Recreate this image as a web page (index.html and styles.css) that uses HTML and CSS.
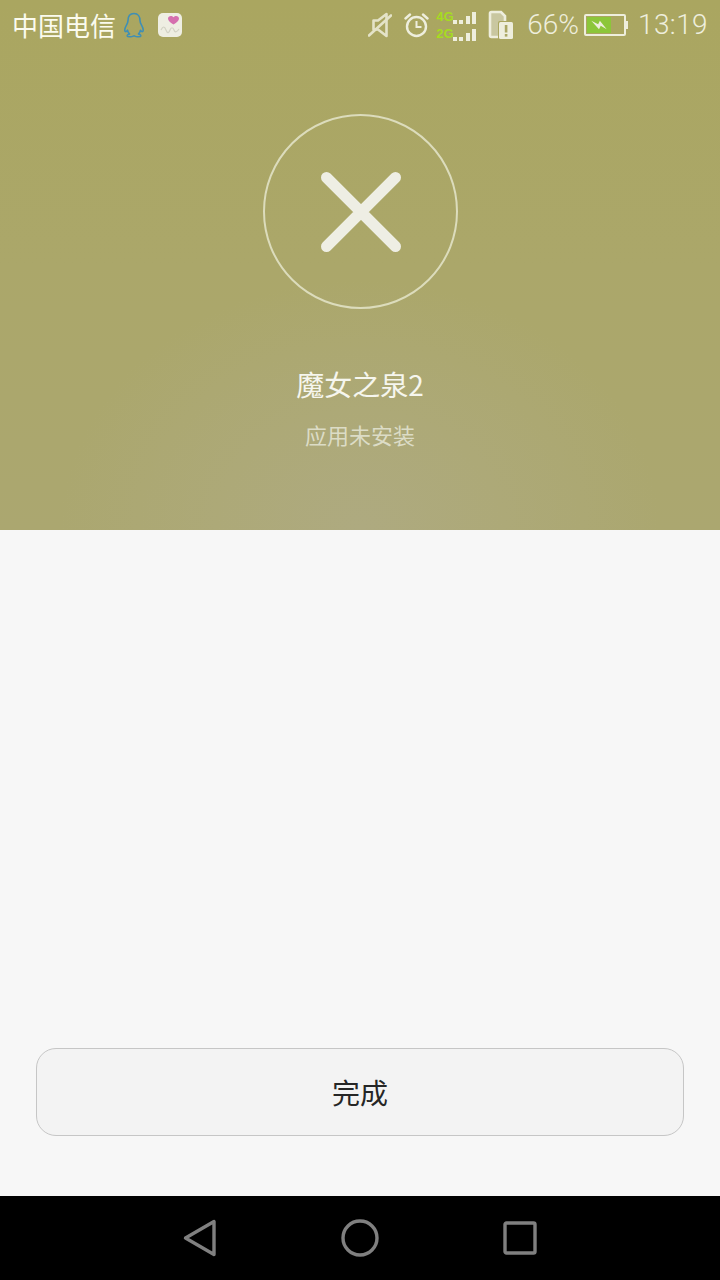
FILE: index.html
```html
<!DOCTYPE html>
<html lang="zh-CN">
<head>
    <meta charset="UTF-8">
    <meta name="viewport" content="width=device-width, initial-scale=1.0">
    <title>应用未安装</title>
    <link rel="stylesheet" href="styles.css">
</head>
<body>
    <div class="cabecera">
        <div class="estado">
            <div class="estado-izq">
                <span class="operador">中国电信</span>
                <svg class="qq" width="22" height="26" viewBox="0 0 22 26" fill="none" stroke="#3f8fb5" stroke-width="1.6" stroke-linejoin="round">
                    <path d="M11 1.500C6.800 1.500 5 4.800 5 8.500c0 2-.6 3-1.800 5.200C2 16 1.400 18.600 2.300 19.500c.7.600 1.500-.3 2.200-1.300.4 1.600 1 2.800 2 3.700-1.500.5-2.500 1.200-2.300 2 .3 1 3 .9 4.800.6 1-.2 1.500-.6 2-.6s1 .4 2 .6c1.800.3 4.500.4 4.800-.6.2-.8-.8-1.500-2.300-2 1-.9 1.600-2.100 2-3.700.7 1 1.500 1.900 2.200 1.300.9-.9.300-3.500-.9-5.800C17.600 11.500 17 10.500 17 8.500 17 4.800 15.200 1.500 11 1.500Z"/>
                </svg>
                <svg class="salud" width="24" height="24" viewBox="0 0 24 24">
                    <rect width="24" height="24" rx="5" fill="#eeeee2"/>
                    <path d="M15.500 11.500c-3.500-2.300-5.500-3.800-5.500-6 0-2.700 3.800-3.500 5.500-1.200C17.200 2 21 2.800 21 5.500c0 2.200-2 3.700-5.500 6Z" fill="#d56fae"/>
                    <path d="M3 17c2-4 3.500-4 5 0s3 3 4 0 3-3 4 0 3 2 5-1" fill="none" stroke="#d2d2c4" stroke-width="1.200"/>
                </svg>
            </div>
            <div class="estado-der">
                <svg class="mudo" width="24" height="26" viewBox="0 0 24 26" fill="none" stroke="#e4e3c8" stroke-width="2.600">
                    <path d="M5.500 8.500h4.500l8.500-6.500v22l-8.500-6.500H5.500Z" stroke-linejoin="round"/>
                    <path d="M1 23.500 23 3.500" stroke-linecap="round"/>
                </svg>
                <svg class="alarma" width="26" height="26" viewBox="0 0 26 26" fill="none" stroke="#eeeedd" stroke-width="2.400">
                    <circle cx="12.500" cy="14.500" r="9.500"/>
                    <path d="M12.500 9v6h5" stroke-width="2"/>
                    <path d="M1.500 6.500 6 2.500M23.500 6.500 19 2.500" stroke-linecap="round"/>
                </svg>
                <div class="senal">
                    <div class="senal-fila">
                        <span class="red">4G</span>
                        <div class="barras"><i class="b1"></i><i class="b2"></i><i class="b3"></i><i class="b4"></i></div>
                    </div>
                    <div class="senal-fila">
                        <span class="red">2G</span>
                        <div class="barras"><i class="b1"></i><i class="b2"></i><i class="b3"></i><i class="b4"></i></div>
                    </div>
                </div>
                <svg class="sim" width="26" height="30" viewBox="0 0 26 30">
                    <path d="M2 3.500A1.500 1.500 0 0 1 3.500 2H13l4 4v19.500a1.500 1.500 0 0 1-1.500 1.500h-12A1.500 1.500 0 0 1 2 25.500Z" fill="#c9c7a0" stroke="#eeeedd" stroke-width="2.600"/>
                    <rect x="10" y="11" width="16" height="19" rx="2" fill="#aaa660"/>
                    <rect x="11" y="12" width="14" height="17" rx="1.500" fill="#eeeedd"/>
                    <rect x="16.800" y="15" width="2.600" height="7.500" fill="#aba764"/>
                    <rect x="16.800" y="24" width="2.600" height="2.600" fill="#aba764"/>
                </svg>
                <span class="porcentaje">66%</span>
                <div class="bateria">
                    <div class="bateria-cuerpo">
                        <div class="bateria-carga" style="width: 68%">
                            <svg width="18" height="12" viewBox="0 0 20 14"><path d="M1 2 9 6l2-4 8 10-7-4-2 4Z" fill="#eeeedd"/></svg>
                        </div>
                    </div>
                    <div class="bateria-punta"></div>
                </div>
                <span class="hora">13:19</span>
            </div>
        </div>

        <div class="circulo">
            <svg width="80" height="80" viewBox="0 0 80 80" fill="none" stroke="#eeeee4" stroke-width="11" stroke-linecap="round">
                <path d="M5.500 5.500 74.500 74.500M74.500 5.500 5.500 74.500"/>
            </svg>
        </div>
        <h1 class="titulo">魔女之泉2</h1>
        <p class="subtitulo">应用未安装</p>
    </div>

    <div class="contenido">
        <button class="boton">完成</button>
    </div>

    <div class="navegacion">
        <svg width="34" height="38" viewBox="0 0 34 38" fill="none" stroke="#808080" stroke-width="3.400" stroke-linejoin="round">
            <path d="M2.500 19 31 2.500v33Z"/>
        </svg>
        <svg width="38" height="38" viewBox="0 0 38 38" fill="none" stroke="#808080" stroke-width="3.400">
            <circle cx="19" cy="19" r="17"/>
        </svg>
        <svg width="34" height="34" viewBox="0 0 34 34" fill="none" stroke="#808080" stroke-width="3.400" stroke-linejoin="round">
            <rect x="2" y="2" width="30" height="30" rx="1.500"/>
        </svg>
    </div>
</body>
</html>
```

FILE: styles.css
```css
*{
    box-sizing: border-box;
}
html, body{
    height: 100%;
}
body{
    margin: 0;
    display: flex;
    flex-direction: column;
    height: 1280px;
    overflow: hidden;
    font-family: "Noto Sans CJK SC", "Noto Sans", sans-serif;
    background: #f7f7f7;
}
.cabecera{
    height: 530px;
    display: flex;
    flex-direction: column;
    align-items: center;
    background:
        radial-gradient(ellipse 300px 250px at 50% 100%, #aeaa80 0%, rgba(174, 170, 124, .7) 45%, rgba(174, 170, 124, 0) 100%),
        linear-gradient(180deg, #aaa660 0%, #aba76a 50%, #aba770 100%);
}
.estado{
    width: 100%;
    height: 50px;
    padding: 0 12px 0 12px;
    display: flex;
    justify-content: space-between;
    align-items: center;
    color: #f4f4e6;
}
.estado-izq, .estado-der{
    display: flex;
    align-items: center;
}
.operador{
    font-size: 26px;
    line-height: 50px;
    color: #fbfbee;
}
.qq{
    margin-left: 7px;
}
.salud{
    margin-left: 13px;
}
.mudo{
    margin-right: 12px;
}
.alarma{
    margin-right: 6px;
}
.senal{
    display: flex;
    flex-direction: column;
    gap: 2px;
    width: 40px;
    margin-right: 12px;
}
.senal-fila{
    display: flex;
    justify-content: space-between;
    align-items: flex-end;
    height: 15px;
}
.red{
    font-family: "Liberation Sans", sans-serif;
    font-size: 13px;
    font-weight: bold;
    line-height: 15px;
    color: #a6dc20;
}
.barras{
    display: flex;
    align-items: flex-end;
    gap: 2.500px;
    margin-left: -4px;
}
.barras i{
    display: block;
    width: 4px;
    background: #eeeedd;
}
.b1{ height: 4px; }
.b2{ height: 4px; }
.b3{ height: 8px; }
.b4{ height: 12px; }
.porcentaje, .hora{
    font-family: Roboto, sans-serif;
    font-weight: 300;
    font-size: 28px;
    line-height: 50px;
    color: #eeeedd;
}
.porcentaje{
    margin-left: 13px;
}
.bateria{
    display: flex;
    align-items: center;
    margin-left: 5px;
}
.bateria-cuerpo{
    width: 42px;
    height: 22px;
    padding: 1px;
    border: 2px solid #eeeedd;
    border-radius: 2px;
}
.bateria-carga{
    height: 100%;
    display: flex;
    align-items: center;
    justify-content: center;
    background: #8cc63a;
}
.bateria-punta{
    width: 2px;
    height: 8px;
    background: #eeeedd;
}
.hora{
    margin-left: 10px;
    letter-spacing: .4px;
}
.circulo{
    width: 195px;
    height: 195px;
    margin-top: 64px;
    display: flex;
    align-items: center;
    justify-content: center;
    border: 2px solid #dcdcbc;
    border-radius: 50%;
}
.circulo svg{
    margin-left: 1px;
}
.titulo{
    margin: 55px 0 0;
    font-size: 28px;
    font-weight: 400;
    line-height: 40px;
    color: #f6f6ee;
}
.subtitulo{
    margin: 14px 0 0;
    font-size: 22px;
    line-height: 32px;
    color: #dcdcc6;
}
.contenido{
    flex: 1;
    display: flex;
    align-items: flex-end;
    padding: 0 36px 60px;
}
.boton{
    width: 100%;
    height: 88px;
    padding: 0;
    border: 1px solid #c6c6c6;
    border-radius: 20px;
    background: #f3f3f3;
    color: #262626;
    font-family: inherit;
    font-size: 28px;
}
.navegacion{
    height: 84px;
    padding: 0 183px;
    display: flex;
    justify-content: space-between;
    align-items: center;
    background: #000;
}
```
